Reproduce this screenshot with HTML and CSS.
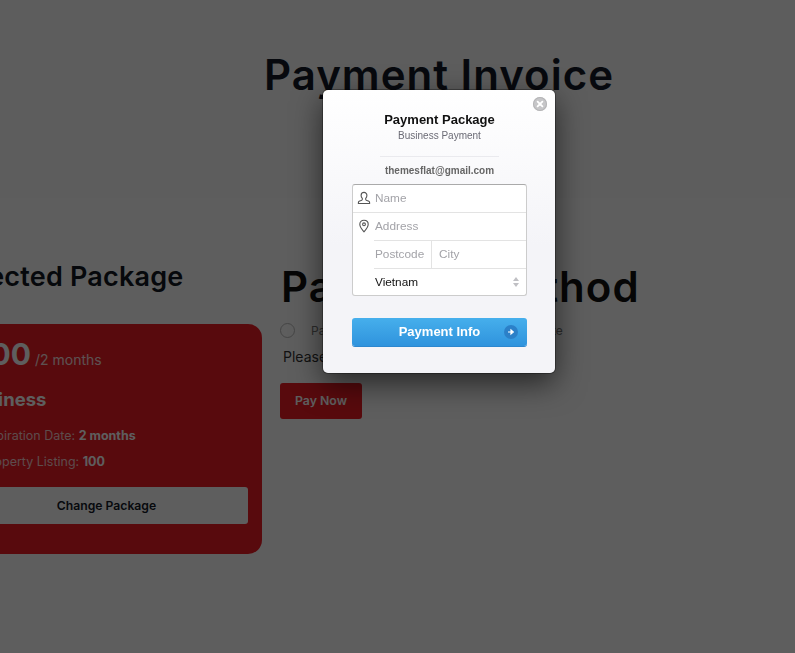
FILE: index.html
```html
<!DOCTYPE html>
<html lang="en">
<head>
<meta charset="utf-8">
<title>Payment Invoice</title>
<link rel="stylesheet" href="styles.css">
</head>
<body>
<div class="page">
  <header class="hero"><h1>Payment Invoice</h1></header>
  <main class="content">
    <section class="package">
      <h2>Selected Package</h2>
      <div class="card">
        <p class="price"><strong>$100</strong> <span>/2 months</span></p>
        <h3>Business</h3>
        <p class="meta">Expiration Date: <b>2 months</b></p>
        <p class="meta">Property Listing: <b>100</b></p>
        <a class="change">Change Package</a>
      </div>
    </section>
    <section class="method">
      <h2>Payment Method</h2>
      <div class="radio-row"><span class="radio"></span><span class="radio-label">Pay by credit card or transfer on the website</span></div>
      <p class="note">Please choose a payment method</p>
      <a class="pay">Pay Now</a>
    </section>
  </main>
</div>
<div class="overlay"></div>
<div class="modal">
  <button class="close" aria-label="Close">
    <svg viewBox="0 0 14 14" width="14" height="14"><path d="M4.6 4.6l4.8 4.8M9.4 4.6L4.6 9.4" stroke="#fff" stroke-width="1.8" stroke-linecap="round"/></svg>
  </button>
  <h4>Payment Package</h4>
  <p class="sub">Business Payment</p>
  <div class="rule"></div>
  <p class="email">themesflat@gmail.com</p>
  <div class="form">
    <div class="row">
      <svg class="ico" viewBox="0 0 14 14" width="14" height="14"><path d="M7 1.4c-1.8 0-2.9 1.3-2.9 3 0 1.300.5 2.200 1.200 2.900v1.300c0 .5-.4.7-1 .9l-1.700.6c-.8.3-1.200.8-1.200 1.500v.9h11.200v-.9c0-.7-.4-1.200-1.200-1.500l-1.700-.6c-.6-.2-1-.4-1-.9V7.300c.7-.7 1.200-1.600 1.200-2.900 0-1.700-1.100-3-2.900-3z" fill="none" stroke="#555" stroke-width="1.100"/></svg>
      <span class="ph">Name</span>
    </div>
    <div class="row addr">
      <svg class="ico" viewBox="0 0 14 14" width="14" height="14"><path d="M7 1.200c-2.500 0-4.200 1.800-4.200 4.100C2.800 8.200 7 12.800 7 12.800s4.200-4.600 4.200-7.500C11.200 3 9.500 1.200 7 1.200z" fill="none" stroke="#555" stroke-width="1.100"/><circle cx="7" cy="5.300" r="1.400" fill="none" stroke="#555" stroke-width="1.100"/></svg>
      <span class="ph">Address</span>
    </div>
    <div class="row inset">
      <span class="ph postcode">Postcode</span>
      <span class="ph city">City</span>
    </div>
    <div class="row inset last">
      <span class="country">Vietnam</span>
      <span class="arrows"><i class="up"></i><i class="down"></i></span>
    </div>
  </div>
  <button class="submit">
    <span>Payment Info</span>
    <span class="go"><svg viewBox="0 0 14 14" width="14" height="14"><path d="M4 7h3.500M7 5l2.300 2L7 9z" stroke="#fff" stroke-width="1.200" fill="#fff"/></svg></span>
  </button>
</div>
</body>
</html>
```

FILE: styles.css
```css
* { box-sizing: border-box; }
html, body { margin: 0; height: 100%; overflow: hidden; }
body { background: #fff; font-family: "Inter", "Liberation Sans", sans-serif; color: #111722; }
.page { width: 878px; height: 653px; }
.hero { height: 198px; background: #fbfbfc; padding-top: 46px; text-align: center; }
.hero h1 { margin: 0; font-size: 42px; line-height: 58px; font-weight: 600; letter-spacing: 1px; color: #141a28; }
.content { display: flex; gap: 18px; margin-left: -118px; padding-top: 60px; }
.package { width: 380px; }
.package h2 { margin: 0 0 28px; padding-left: 65px; font-size: 27px; line-height: 38px; font-weight: 600; letter-spacing: .2px; white-space: nowrap; }
.card { height: 230px; background: #ee1c25; border-radius: 14px; padding: 12px 14px 0 118px; color: #fff; }
.price { margin: 0 0 0 -42px; line-height: 36px; font-size: 14px; }
.price strong { font-size: 30px; font-weight: 700; }
.price span { font-size: 14px; opacity: .85; }
.card h3 { margin: 8px 0 16px -36px; font-size: 18.500px; line-height: 26px; font-weight: 700; }
.meta { margin: 0 0 10px -18px; font-size: 12.500px; line-height: 16px; white-space: nowrap; color: rgba(255, 255, 255, .78); }
.meta b { color: #fff; }
.change { display: block; height: 37px; margin: 17px 0 0 -118px; padding-left: 83px; background: #fff; border-radius: 3px; font-size: 12.200px; line-height: 37px; font-weight: 600; text-align: center; color: #141a28; }
.method { width: 420px; }
.method h2 { margin: -1px 0 5px 1px; font-size: 42px; line-height: 60px; font-weight: 600; letter-spacing: 1px; color: #111; white-space: nowrap; }
.radio-row { display: flex; align-items: center; gap: 16px; height: 16px; }
.radio { width: 15px; height: 15px; border-radius: 50%; border: 1px solid #bbb; flex: none; }
.radio-label { font-size: 12px; color: #777; white-space: nowrap; }
.note { margin: 9px 0 0 3px; font-size: 14px; line-height: 20px; color: #333; }
.pay { display: block; width: 82px; height: 36px; margin-top: 16px; background: #ee1c25; border-radius: 3px; color: #fff; font-size: 12.300px; font-weight: 600; line-height: 36px; text-align: center; }
.overlay { position: fixed; inset: 0; background: rgba(0, 0, 0, .63); }
.modal { position: absolute; left: 323px; top: 90px; width: 232px; height: 283px; padding: 21px 28px 0 29px; border-radius: 5px; background: linear-gradient(#fff, #f4f4f8 55%); box-shadow: 0 0 0 1px rgba(0,0,0,.3), 0 10px 30px rgba(0,0,0,.6); font-family: "Liberation Sans", Arial, sans-serif; text-align: center; }
.close { position: absolute; right: 8px; top: 7px; width: 14px; height: 14px; padding: 0; border: 0; border-radius: 50%; background: #c6c6c8; box-shadow: inset 0 0 0 1px #b5b5b7; display: flex; }
.modal h4 { margin: 0; font-size: 13px; line-height: 17px; font-weight: 700; color: #111; }
.sub { margin: 1px 0 0; font-size: 10px; line-height: 14px; color: #6b6b75; }
.rule { height: 1px; width: 119px; margin: 13px auto 0; background: #eaeaee; }
.email { margin: 7px 0 0; font-size: 10px; line-height: 13px; font-weight: 700; color: #666; }
.form { margin-top: 7px; height: 112px; background: #fff; border: 1px solid #ccc; border-top-color: #aaa; border-radius: 3px; overflow: hidden; text-align: left; }
.row { height: 27.500px; display: flex; align-items: center; padding-left: 22px; position: relative; border-bottom: 1px solid #e3e3e3; font-size: 11.800px; }
.row.addr { border-bottom: 0; }
.row.inset { margin-left: 21px; padding-left: 1px; border-top: 1px solid #e3e3e3; border-bottom: 0; }
.ico { position: absolute; left: 4px; top: 6px; }
.ph { color: #a3a3a8; }
.postcode { width: 57px; height: 100%; line-height: 26px; border-right: 1px solid #e3e3e3; flex: none; }
.city { padding-left: 7px; }
.country { color: #111; }
.arrows { position: absolute; right: 7px; top: 8px; display: flex; flex-direction: column; gap: 2px; }
.arrows i { display: block; width: 0; height: 0; border-left: 3.500px solid transparent; border-right: 3.500px solid transparent; }
.up { border-bottom: 4px solid #c0c0c4; }
.down { border-top: 4px solid #c0c0c4; }
.submit { position: relative; display: block; width: 175px; height: 28px; margin-top: 22px; padding: 0; border: 0; border-radius: 3px; background: linear-gradient(#46afec, #2f93dd); box-shadow: 0 1px 0 #2c87cf; color: #fff; font: 700 13px/26px "Liberation Sans", Arial, sans-serif; text-align: center; }
.go { position: absolute; right: 9px; top: 7px; width: 14px; height: 14px; border-radius: 50%; background: #2b80c8; display: flex; }
```
